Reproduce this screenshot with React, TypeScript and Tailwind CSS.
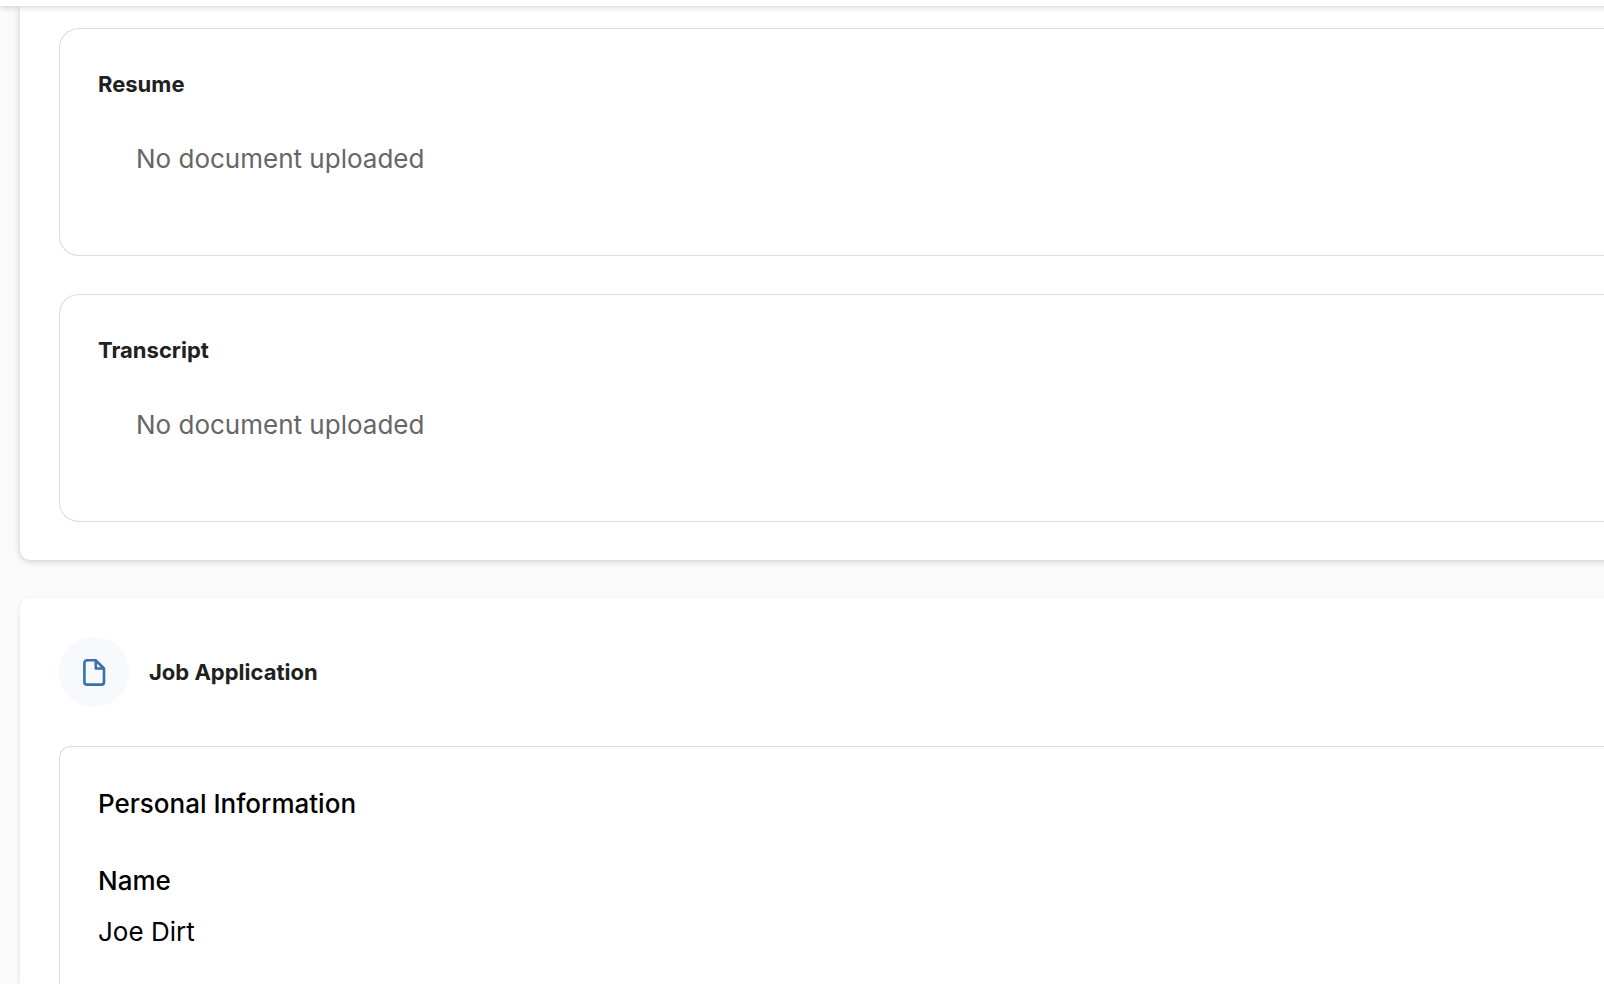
interface UploadedDocument {
  id: string;
  title: string;
  fileName?: string;
}

interface Field {
  label: string;
  value: string;
}

const documents: UploadedDocument[] = [
  { id: 'resume', title: 'Resume' },
  { id: 'transcript', title: 'Transcript' },
];

const personalInformation: Field[] = [{ label: 'Name', value: 'Joe Dirt' }];

function FileIcon() {
  return (
    <svg
      viewBox="0 0 24 28"
      fill="none"
      stroke="currentColor"
      strokeWidth="2.6"
      strokeLinejoin="round"
      className="h-7 w-6"
      aria-hidden="true"
    >
      <path d="M5 2.3H13.8L22 10.5V24A2.6 2.6 0 0 1 19.4 26.6H5A2.6 2.6 0 0 1 2.4 24V4.9A2.6 2.6 0 0 1 5 2.3Z" />
      <path d="M13.8 2.3V10.5H22" />
    </svg>
  );
}

function DocumentCard({ document }: { document: UploadedDocument }) {
  return (
    <article className="rounded-l-[20px] border border-r-0 border-[#dcdcdc] py-[38px] pl-[38px]">
      <h3 className="text-[22px] leading-[35px] font-bold text-[#212121]">{document.title}</h3>
      <div className="pt-[38px] pb-[39px] pl-[38px]">
        <p className="text-[26px] leading-[38px] text-[#666666]">
          {document.fileName ?? 'No document uploaded'}
        </p>
      </div>
    </article>
  );
}

export default function App() {
  return (
    <div className="flex h-screen flex-col overflow-hidden bg-[#fafafa] font-['Inter',sans-serif]">
      <header className="z-10 -mr-5 h-1.5 shrink-0 bg-white shadow-[0_1px_6px_rgba(0,0,0,0.2)]" />

      <main className="-mr-5 flex flex-1 flex-col gap-[38px] pl-5">
        {/* Documents */}
        <section className="flex flex-col gap-[38px] rounded-bl-[10px] bg-white pt-[22px] pb-[38px] pl-[39px] shadow-[0_1px_6px_rgba(0,0,0,0.2)]">
          {documents.map((document) => (
            <DocumentCard key={document.id} document={document} />
          ))}
        </section>

        {/* Job application */}
        <section className="flex flex-1 flex-col gap-[39px] rounded-tl-[10px] bg-white pt-[39px] pl-[39px] shadow-[0_2px_5px_rgba(0,0,0,0.1)]">
          <div className="flex items-center gap-5">
            <div className="flex size-[70px] items-center justify-center rounded-full bg-[#f8f9fd] text-[#386fae]">
              <FileIcon />
            </div>
            <h2 className="text-[22px] leading-[35px] font-bold text-[#212121]">Job Application</h2>
          </div>

          <div className="flex-1 rounded-tl-xl border-t border-l border-[#dcdcdc] pt-[37px] pl-[38px] text-[26px] leading-[39px] text-black">
            <h3 className="font-medium">Personal Information</h3>
            <dl className="mt-[38px]">
              {personalInformation.map((field) => (
                <div key={field.label} className="flex flex-col gap-3">
                  <dt className="font-medium">{field.label}</dt>
                  <dd>{field.value}</dd>
                </div>
              ))}
            </dl>
          </div>
        </section>
      </main>
    </div>
  );
}
